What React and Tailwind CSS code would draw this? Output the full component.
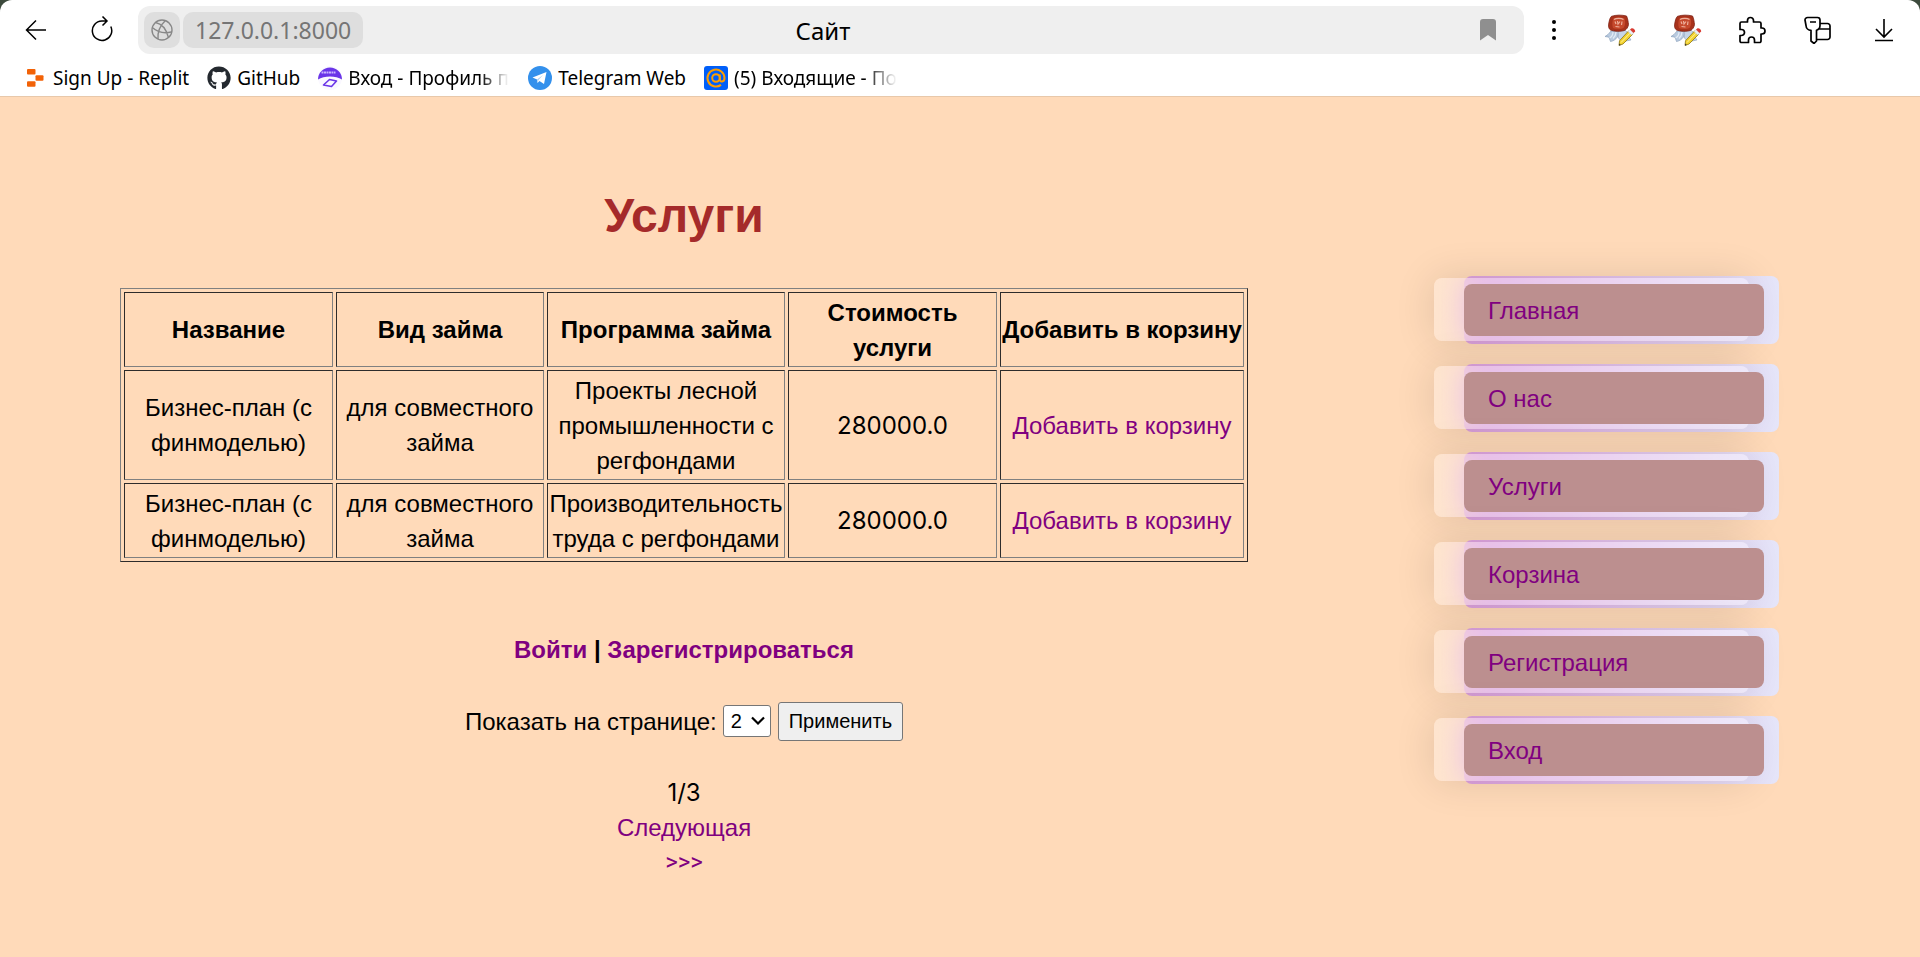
import { useState } from "react";
import { FaGithub } from "react-icons/fa";

const rows = [
  { name: "Бизнес-план (с финмоделью)", loan: "для совместного займа", program: "Проекты лесной промышленности с регфондами", price: "280000.0", height: "h-[110px]" },
  { name: "Бизнес-план (с финмоделью)", loan: "для совместного займа", program: "Производительность труда с регфондами", price: "280000.0", height: "h-[75px]" },
];

const menu = ["Главная", "О нас", "Услуги", "Корзина", "Регистрация", "Вход"];

const cell = "border border-t-[#2e2c2b] border-l-[#2e2c2b] border-r-[#808080] border-b-[#808080] p-px";
const link = "text-[#800080]";

function SealIcon() {
  return (
    <svg className="h-8 w-8" viewBox="0 0 32 32">
      <path d="M7 17 4 20.500 1 22.500l4 .7 1.500 4.300c3-.5 5-2 7-4.500l2-6z" fill="#b9cbe0" stroke="#8298b5" strokeWidth=".6" />
      <path d="M9 18c0 3-1.500 5-3.500 6M12 18c0 2.500-1 4.500-3 6.500" fill="none" stroke="#e3ecf6" strokeWidth="1.200" />
      <path d="M14 17l.5 7 3.500 4 4-1 5-1-2-3 0-3-4-4z" fill="#c5d5e8" stroke="#8ba0ba" strokeWidth=".6" />
      <path d="M7.500 2.300C12 .8 18 .8 22.500 2c1.500 3 1.500 5.500 2 8.500-.5 3-2 5-4 6-4 1.300-10 1-14-.5-1.500-1-2.300-3-1.800-6 .5-3 1-6 2.800-7.700z" fill="#a8321b" stroke="#7d1f12" strokeWidth=".8" />
      <path d="M9.500 4.500c3-1.500 8.500-1.500 11 0 1 3 1 6.500-1 9.500-3 1.500-7.500 1-10.500 0-1-3-1-6.500.5-9.500z" fill="#c5492d" />
      <path d="M10 5.500c2-1.500 7.500-1.500 9.500 0M11 7.500l1 2.500M13.500 7l.5 3 2-2.500M18 7.500 17.500 11M11.500 12.500l4 .5" fill="none" stroke="#eeb09c" strokeWidth="1.200" />
      <path d="M24.500 17 28.500 20.500 19 30l-4 1.500.5-4.700z" fill="#f3d32f" stroke="#8e7510" strokeWidth=".8" />
      <path d="m26.500 18.700-9.500 9.800" stroke="#fff3a0" strokeWidth="1" />
      <path d="m24 17.500 2-2 3.700 3.500-2 2z" fill="#eceff3" stroke="#a9b2bc" strokeWidth=".4" />
      <path d="m26 15.500 1.200-1c2-.6 4 1 4 3L29.500 19z" fill="#d93a30" />
      <path d="m15 31.500.2-2 1.600 1.400z" fill="#333" />
    </svg>
  );
}

function BrowserBar() {
  return (
    <header className="flex h-[97px] flex-col border-b border-[#e8c8aa] bg-[#3c4a3c]">
      <div className="flex flex-1 flex-col rounded-t-[12px] bg-white font-['Noto_Sans','Open_Sans',sans-serif]">
        <div className="flex h-[60px] items-center">
          <button aria-label="Назад" className="ml-[24px] h-6 w-6">
            <svg className="h-6 w-6" viewBox="0 0 24 24" fill="none" stroke="#000" strokeWidth="1.500"><path d="M22 12H2.500M12 2.500 2.500 12l9.500 9.500" /></svg>
          </button>
          <button aria-label="Обновить" className="ml-10 h-7 w-7">
            <svg className="h-7 w-7" viewBox="0 0 28 28" fill="none" stroke="#000" strokeWidth="1.500"><path d="M22.800 10.500a9.700 9.700 0 1 1-9-5.500H19M14.500.5 19 5l-4.500 4.500" /></svg>
          </button>
          <div className="relative ml-[22px] flex h-12 flex-1 items-center gap-[3px] rounded-[12px] bg-[#efefef] px-1.5">
            <button aria-label="Сведения о сайте" className="flex h-9 w-9 items-center justify-center rounded-[10px] bg-[#dedede]">
              <svg className="h-[22px] w-[22px]" viewBox="0 0 22 22" fill="none" stroke="#888" strokeWidth="1.400"><circle cx="11" cy="11" r="10" /><path d="M1.300 8.500c5 4.500 12.500 6 19 4.500M4.500 3.500C10 4.500 15 9.500 17.500 18.500M14.500 1.500C9.500 6 6.500 13 7 20" /></svg>
            </button>
            <span className="flex h-9 items-center rounded-[10px] bg-[#dedede] px-3 text-[23px] text-[#757575]">127.0.0.1:8000</span>
            <span className="absolute inset-0 flex items-center justify-center pr-4 text-[24px] text-black">Сайт</span>
            <button aria-label="В закладки" className="relative ml-auto mr-[22px]">
              <svg className="h-[22px] w-4" viewBox="0 0 16 22" fill="#8f8f8f"><path d="M0 3a3 3 0 0 1 3-3h10a3 3 0 0 1 3 3v18.500L8 16l-8 5.500z" /></svg>
            </button>
          </div>
          <div className="flex items-center pl-[22px] pr-[24px]">
            <button aria-label="Меню" className="h-6 w-4">
              <svg className="h-6 w-4" viewBox="0 0 16 24"><circle cx="8" cy="4" r="2" /><circle cx="8" cy="12" r="2" /><circle cx="8" cy="20" r="2" /></svg>
            </button>
            <button aria-label="Расширение 1" className="ml-[42px]"><SealIcon /></button>
            <button aria-label="Расширение 2" className="ml-[34px]"><SealIcon /></button>
            <button aria-label="Расширения" className="ml-[36px]">
              <svg className="h-7 w-7" viewBox="0 0 28 28" fill="none" stroke="#000" strokeWidth="1.700" strokeLinejoin="round"><path d="M3.500 6h6V4.500a3 3 0 0 1 6 0V6h6a1.500 1.500 0 0 1 1.500 1.500V12h1a3 3 0 0 1 0 6h-1v7a1.500 1.500 0 0 1-1.500 1.500h-5V24a3 3 0 0 0-6 0v2.500H3.500A1.500 1.500 0 0 1 2 25v-5.500h1.500a3 3 0 0 0 0-6H2v-6A1.500 1.500 0 0 1 3.500 6z" /></svg>
            </button>
            <button aria-label="Пароли" className="ml-[38px]">
              <svg className="h-7 w-7" viewBox="0 0 28 28" fill="none" stroke="#000" strokeWidth="1.700" strokeLinejoin="round"><path d="M3.500 1.500h10A2.500 2.500 0 0 1 16 4v5.500a5 5 0 0 1-3.500 4.800V25l-2.500 2.500L7 25V14.300a5 5 0 0 1-5-4.800L1 4a2.500 2.500 0 0 1 2.500-2.500zM6 6h6M16 7.500h7.500A2.500 2.500 0 0 1 26 10v11a2.500 2.500 0 0 1-2.500 2.500h-11M15 13h11" /></svg>
            </button>
            <button aria-label="Загрузки" className="ml-[40px]">
              <svg className="h-6 w-6" viewBox="0 0 24 24" fill="none" stroke="#000" strokeWidth="1.600"><path d="M12 1v17M4 11l8 8 8-8M3 22.500h18" /></svg>
            </button>
          </div>
        </div>
        <nav aria-label="Закладки" className="flex flex-1 items-center text-[19px] text-black">
          <a href="#replit" className="ml-[27px] flex items-center whitespace-nowrap">
            <svg className="mr-[9px] h-[18px] w-[17px]" viewBox="0 0 17 18" fill="#f26207"><rect width="8.500" height="5.500" rx="1" /><rect x="8.500" y="6.200" width="8" height="5.500" rx="1" /><rect y="12.300" width="8.500" height="5.500" rx="1" /></svg>
            Sign Up - Replit
          </a>
          <a href="#github" className="ml-[18px] flex items-center">
            <FaGithub className="mr-1.5 h-6 w-6 text-[#24292f]" />GitHub
          </a>
          <a href="#profile" className="ml-[18px] flex w-[192px] items-center">
            <svg className="mr-1.5 h-6 w-6 shrink-0" viewBox="0 0 24 24"><circle cx="12" cy="12" r="12" fill="#faf8ff" /><path d="M0 13.500a12 12 0 1 1 24 0C18 9.500 6 9.500 0 13.500z" fill="#6a35e8" /><path d="M3.500 6.500h14" stroke="#c9b5ff" strokeWidth="2" strokeDasharray="2 .5" /><path d="m5.500 19 6-5.500 7 1.500-5 5.500z" fill="none" stroke="#6a35e8" strokeWidth="1.600" strokeLinejoin="round" /></svg>
            <span className="whitespace-nowrap [mask-image:linear-gradient(to_right,#000_82%,transparent)]">Вход - Профиль п</span>
          </a>
          <a href="#telegram" className="ml-[18px] flex items-center whitespace-nowrap">
            <svg className="mr-1.5 h-6 w-6" viewBox="0 0 24 24"><circle cx="12" cy="12" r="12" fill="#3390ec" /><path d="M4.500 11.500 18.500 6 16 18l-4.500-3-2 2-.5-3.500z" fill="#fff" /><path d="m9 13.500 6-4.500-4.500 5-.8 2.500z" fill="#a9cff5" /></svg>
            Telegram Web
          </a>
          <a href="#mail" className="ml-[18px] flex items-center">
            <svg className="mr-1.5 h-6 w-6 shrink-0" viewBox="0 0 24 24" fill="none" stroke="#ff9e00" strokeWidth="2"><rect width="24" height="24" rx="3" fill="#005ff9" stroke="none" /><circle cx="12" cy="12" r="3.800" /><path d="M15.800 8.500V13c0 3.500 4.700 3.500 4.700-1A8.500 8.500 0 1 0 17 18.900" /></svg>
            <span className="whitespace-nowrap [mask-image:linear-gradient(to_right,#000_80%,transparent)]">(5) Входящие - По</span>
          </a>
        </nav>
      </div>
    </header>
  );
}

export default function App() {
  const [size, setSize] = useState("2");
  return (
    <div className="flex min-h-screen flex-col bg-[#ffdab9] font-['Liberation_Sans',Arial,sans-serif] text-[24px] leading-[35px] text-black">
      <BrowserBar />
      <div className="flex flex-1 items-start">
        <main className="ml-[120px] flex w-[1128px] flex-col items-center text-center">
          <h1 className="mt-[83px] text-[48px] font-bold leading-[72px] text-[#a52a2a]">Услуги</h1>
          <table className="mt-[36px] w-full table-fixed border-separate border-spacing-[3px] border border-t-[#808080] border-l-[#808080] border-r-[#2e2c2b] border-b-[#2e2c2b]">
            <thead>
              <tr className="h-[75px]">
                <th className={`${cell} w-[209px]`}>Название</th>
                <th className={`${cell} w-[208px]`}>Вид займа</th>
                <th className={`${cell} w-[238px]`}>Программа займа</th>
                <th className={`${cell} w-[209px]`}>Стоимость услуги</th>
                <th className={`${cell} whitespace-nowrap`}>Добавить в корзину</th>
              </tr>
            </thead>
            <tbody>
              {rows.map((r) => (
                <tr key={r.program} className={r.height}>
                  <td className={cell}>{r.name}</td>
                  <td className={cell}>{r.loan}</td>
                  <td className={cell}>{r.program}</td>
                  <td className={`${cell} font-['Inter',sans-serif]`}>{r.price}</td>
                  <td className={cell}><a href="#cart" className={link}>Добавить в корзину</a></td>
                </tr>
              ))}
            </tbody>
          </table>
          <p className="mt-[70px] font-bold">
            <a href="#login" className={link}>Войти</a> | <a href="#register" className={link}>Зарегистрироваться</a>
          </p>
          <form className="mt-[34px] flex h-[40px] items-center" onSubmit={(e) => e.preventDefault()}>
            <label htmlFor="size" className="mr-1.5">Показать на странице:</label>
            <span className="relative mr-[7px]">
              <select id="size" value={size} onChange={(e) => setSize(e.target.value)} className="block h-8 w-12 appearance-none rounded-[3px] border border-[#767676] bg-white pl-[7px] text-[20px] leading-[28px]">
                <option>2</option>
                <option>3</option>
                <option>5</option>
              </select>
              <svg className="pointer-events-none absolute right-[6px] top-[11px] h-[10px] w-[14px]" viewBox="0 0 14 10" fill="none" stroke="#000" strokeWidth="2.200"><path d="m1 1.500 6 6 6-6" /></svg>
            </span>
            <button className="h-[39px] rounded-[3px] border border-[#767676] bg-[#efefef] px-[10px] text-[20px]">Применить</button>
          </form>
          <div className="mt-[34px] font-['Inter',sans-serif]">1/3</div>
          <a href="#next" className={`${link} flex flex-col`}><span>Следующая</span><span className="font-['Roboto',sans-serif]">&gt;&gt;&gt;</span></a>
        </main>
        <nav aria-label="Разделы" className="ml-[186px] mt-[179px]">
          <ul className="flex flex-col gap-5">
            {menu.map((m) => (
              <li key={m} className="relative ml-[30px] h-[68px] w-[315px] rounded-[8px] bg-linear-to-r from-[#dda0dd] to-[#e6e6fa] pt-2">
                <div className="absolute -left-[30px] top-[2px] h-[63px] w-[315px] rounded-[8px] bg-white/30 shadow-[0_0_40px_rgba(0,0,0,0.12)] backdrop-blur-[15px]" />
                <a href="#section" className={`${link} relative flex h-[52px] w-[300px] items-center rounded-[8px] bg-[#bc8f8f] pl-6`}>{m}</a>
              </li>
            ))}
          </ul>
        </nav>
      </div>
    </div>
  );
}
